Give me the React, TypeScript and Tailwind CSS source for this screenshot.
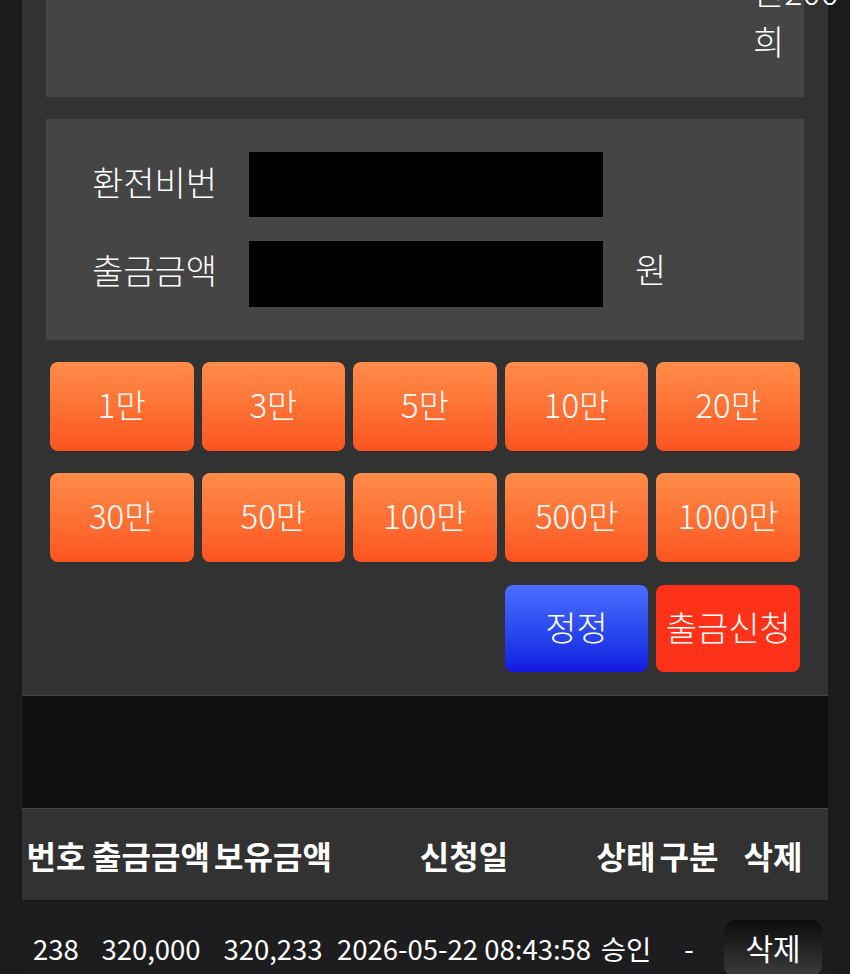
import React from "react";

const amounts = ["1만", "3만", "5만", "10만", "20만", "30만", "50만", "100만", "500만", "1000만"];

const font = { fontFamily: '"Noto Sans CJK KR", "Noto Sans", sans-serif' };

export default function App() {
  return (
    <div
      className="min-h-[974px] w-[850px] bg-[#1b1b1b] text-white overflow-hidden"
      style={font}
    >
      <div className="mx-[22px] w-[806px]">
        {/* main panel */}
        <div className="bg-[#323232] px-[24px] pb-[23px] border-b border-[#454545]">
          {/* top info box */}
          <div className="h-[97px] bg-[#454545] flex justify-end pr-[19px]">
            <div className="w-[32px] mt-[-34px] text-[34px] leading-[50px] font-light">
              <div className="whitespace-nowrap">원200</div>
              <div>희</div>
            </div>
          </div>

          {/* form box */}
          <div className="mt-[22px] h-[221px] bg-[#454545] pl-[46px] pt-[33px] flex flex-col gap-[24px]">
            <div className="flex items-center h-[65px]">
              <div className="w-[157px] text-[34px] leading-none -mt-[6px] font-light">환전비번</div>
              <div className="w-[354px] h-[65px] bg-black" />
            </div>
            <div className="flex items-center h-[66px]">
              <div className="w-[157px] text-[34px] leading-none -mt-[8px] font-light">출금금액</div>
              <div className="w-[354px] h-[66px] bg-black" />
              <div className="ml-[32px] text-[34px] leading-none -mt-[10px] font-light">원</div>
            </div>
          </div>

          {/* amount buttons */}
          <div className="mt-[22px] px-[4px] grid grid-cols-5 gap-x-[8px] gap-y-[22px]">
            {amounts.map((a) => (
              <button
                key={a}
                className="h-[89px] rounded-[8px] bg-gradient-to-b from-[#fe8c48] to-[#fb531e] text-white text-[33px] font-light flex items-center justify-center pb-[3px]"
                style={font}
              >
                {a}
              </button>
            ))}
          </div>

          {/* action buttons */}
          <div className="mt-[23px] px-[4px] grid grid-cols-5 gap-x-[8px]">
            <div className="col-span-3" />
            <button
              className="h-[87px] rounded-[8px] bg-gradient-to-b from-[#4d6dff] to-[#1515e0] text-white text-[34px] font-light flex items-center justify-center pb-[4px]"
              style={font}
            >
              정정
            </button>
            <button
              className="h-[87px] rounded-[8px] bg-[#fd3219] text-white text-[34px] font-light flex items-center justify-center pb-[4px] whitespace-nowrap"
              style={font}
            >
              출금신청
            </button>
          </div>
        </div>

        {/* black spacer */}
        <div className="h-[112px] bg-[#0f0f10] border-l border-[#1a1a1a]" />

        {/* table */}
        <div className="bg-[#323232] border-t border-[#484848] h-[92px] grid grid-cols-[68px_122px_122px_260px_64px_62px_106px] items-center text-[32px] font-bold whitespace-nowrap">
          <div className="text-center">번호</div>
          <div className="text-center">출금금액</div>
          <div className="text-center">보유금액</div>
          <div className="text-center">신청일</div>
          <div className="text-center">상태</div>
          <div className="text-center">구분</div>
          <div className="text-center">삭제</div>
        </div>
        <div className="bg-[#1d1c1e] border-t border-[#161616] h-[90px] pt-[19px] grid grid-cols-[68px_122px_122px_260px_64px_62px_106px] items-start text-[27.5px] whitespace-nowrap">
          <div className="text-center leading-[56px]">238</div>
          <div className="text-center leading-[56px]">320,000</div>
          <div className="text-center leading-[56px]">320,233</div>
          <div className="text-center leading-[56px]">2026-05-22 08:43:58</div>
          <div className="text-center leading-[56px]">승인</div>
          <div className="text-center leading-[56px]">-</div>
          <div className="flex justify-center">
            <button
              className="w-[98px] h-[56px] rounded-[10px] bg-gradient-to-b from-[#0d0d0d] to-[#3c3c3c] text-white text-[30px] flex items-center justify-center pb-[2px]"
              style={font}
            >
              삭제
            </button>
          </div>
        </div>
      </div>
    </div>
  );
}
